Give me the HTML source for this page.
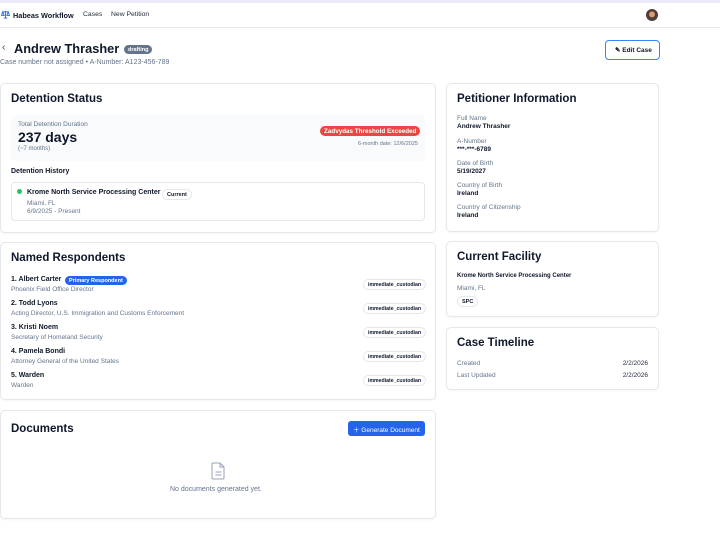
<!DOCTYPE html>
<html><head><meta charset="utf-8"><style>
*{box-sizing:border-box;margin:0;padding:0}
body{width:720px;height:545px;background:#fff;font-family:"Liberation Sans",sans-serif;color:#0f172a;position:relative;overflow:hidden}
.a{position:absolute;white-space:nowrap}
.card{position:absolute;border:1px solid #e5e7eb;border-radius:5px;background:#fff;box-shadow:0 1px 2px rgba(0,0,0,.04)}
.h{font-size:11.5px;font-weight:bold}
.lbl{font-size:6.5px;color:#64748b}
.val{font-size:6.5px;font-weight:bold;color:#0f172a}
.pill{position:absolute;border:1px solid #e5e7eb;border-radius:8px;font-size:5.5px;font-weight:bold;padding:1.5px 4px;background:#fff}
</style></head><body>
<div class="a" style="left:0;top:0;width:720px;height:3px;background:#ede9f6"></div>
<div class="a" style="left:0;top:27px;width:720px;height:1px;background:#e5e7eb"></div>
<svg class="a" style="left:1px;top:10px" width="9" height="9" viewBox="0 0 10 10" fill="none" stroke="#2563eb" stroke-width="1"><path d="M5 1v8M2 2h6M2 2l-1.5 4h3zM8 2l-1.5 4h3zM3 9h4"/></svg>
<div class="a" style="left:13px;top:11px;font-size:7.3px;font-weight:bold">Habeas Workflow</div>
<div class="a" style="left:83px;top:11px;font-size:6.8px;color:#1f2937">Cases</div>
<div class="a" style="left:111px;top:11px;font-size:6.8px;color:#1f2937">New Petition</div>
<div class="a" style="left:646px;top:9px;width:12px;height:12px;border-radius:50%;background:radial-gradient(circle at 50% 45%,#d4a07a 0 30%,#5a3a28 35%,#3b4a60 100%)"></div>

<div class="a" style="left:2px;top:42px;font-size:10px;color:#334155">‹</div>
<div class="a" style="left:14px;top:41px;font-size:12.8px;font-weight:bold">Andrew Thrasher</div>
<div class="a" style="left:124px;top:45px;background:#64748b;color:#fff;border-radius:6px;font-size:5.5px;font-weight:bold;padding:1.5px 4px">drafting</div>
<div class="a" style="left:0;top:59px;font-size:7px;color:#64748b">Case number not assigned • A-Number: A123-456-789</div>
<div class="a" style="left:605px;top:40px;width:55px;height:20px;border:1.5px solid #3b82f6;border-radius:4px;font-size:6.5px;font-weight:bold;padding:5px 0 0 9px">✎ Edit Case</div>

<div class="card" style="left:0;top:83px;width:436px;height:150px">
<div class="a h" style="left:10px;top:9px">Detention Status</div>
<div class="a" style="left:10px;top:31px;width:414px;height:46px;background:#f8fafc;border-radius:5px"></div>
<div class="a lbl" style="left:17px;top:37px">Total Detention Duration</div>
<div class="a" style="left:17px;top:45px;font-size:14px;font-weight:bold">237 days</div>
<div class="a lbl" style="left:17px;top:62px;font-size:6px">(~7 months)</div>
<div class="a" style="left:319px;top:42px;background:#ef4444;color:#fff;border-radius:6px;font-size:6.3px;font-weight:bold;padding:1.5px 4px">Zadvydas Threshold Exceeded</div>
<div class="a lbl" style="left:357px;top:57px;font-size:5.5px">6-month date: 12/6/2025</div>
<div class="a" style="left:10px;top:84px;font-size:7px;font-weight:bold">Detention History</div>
<div class="a" style="left:10px;top:98px;width:414px;height:39px;border:1px solid #e5e7eb;border-radius:4px"></div>
<div class="a" style="left:16px;top:105px;width:5px;height:5px;border-radius:50%;background:#22c55e"></div>
<div class="a" style="left:26px;top:105px;font-size:7px;font-weight:bold">Krome North Service Processing Center</div>
<div class="pill" style="left:161px;top:105px">Current</div>
<div class="a lbl" style="left:26px;top:116px">Miami, FL</div>
<div class="a lbl" style="left:26px;top:124px">6/9/2025 - Present</div>
</div>

<div class="card" style="left:0;top:242px;width:436px;height:158px">
<div class="a h" style="left:10px;top:9px">Named Respondents</div>
<div class="a val" style="left:10px;top:33px;font-size:7px">1. Albert Carter</div>
<div class="a" style="left:64px;top:33px;background:#2563eb;color:#fff;border-radius:6px;font-size:5.5px;font-weight:bold;padding:1.5px 4px">Primary Respondent</div>
<div class="a lbl" style="left:10px;top:43px">Phoenix Field Office Director</div>
<div class="pill" style="left:362px;top:36px;font-size:5.2px">immediate_custodian</div>
<div class="a val" style="left:10px;top:57px;font-size:7px">2. Todd Lyons</div>
<div class="a lbl" style="left:10px;top:67px">Acting Director, U.S. Immigration and Customs Enforcement</div>
<div class="pill" style="left:362px;top:60px;font-size:5.2px">immediate_custodian</div>
<div class="a val" style="left:10px;top:81px;font-size:7px">3. Kristi Noem</div>
<div class="a lbl" style="left:10px;top:91px">Secretary of Homeland Security</div>
<div class="pill" style="left:362px;top:84px;font-size:5.2px">immediate_custodian</div>
<div class="a val" style="left:10px;top:105px;font-size:7px">4. Pamela Bondi</div>
<div class="a lbl" style="left:10px;top:115px">Attorney General of the United States</div>
<div class="pill" style="left:362px;top:108px;font-size:5.2px">immediate_custodian</div>
<div class="a val" style="left:10px;top:129px;font-size:7px">5. Warden</div>
<div class="a lbl" style="left:10px;top:139px">Warden</div>
<div class="pill" style="left:362px;top:132px;font-size:5.2px">immediate_custodian</div>
</div>

<div class="card" style="left:0;top:410px;width:436px;height:109px">
<div class="a h" style="left:10px;top:12px">Documents</div>
<div class="a" style="left:347px;top:10px;width:77px;height:15px;background:#2563eb;border-radius:3px;color:#fff;font-size:6.5px;padding:3px 0 0 5px">＋ Generate Document</div>
<svg class="a" style="left:210px;top:51px" width="15" height="18" viewBox="0 0 15 18" fill="none" stroke="#94a3b8" stroke-width="1"><path d="M2 1h7l4 4v11a1 1 0 01-1 1H2a1 1 0 01-1-1V2a1 1 0 011-1zM9 1v4h4M4.5 10h6M4.5 13h6"/></svg>
<div class="a" style="left:169px;top:75px;font-size:7px;color:#64748b">No documents generated yet.</div>
</div>

<div class="card" style="left:446px;top:83px;width:213px;height:149px">
<div class="a h" style="left:10px;top:9px">Petitioner Information</div>
<div class="a lbl" style="left:10px;top:31px">Full Name</div><div class="a val" style="left:10px;top:39px">Andrew Thrasher</div>
<div class="a lbl" style="left:10px;top:54px">A-Number</div><div class="a val" style="left:10px;top:62px">***-***-6789</div>
<div class="a lbl" style="left:10px;top:76px">Date of Birth</div><div class="a val" style="left:10px;top:84px">5/19/2027</div>
<div class="a lbl" style="left:10px;top:98px">Country of Birth</div><div class="a val" style="left:10px;top:106px">Ireland</div>
<div class="a lbl" style="left:10px;top:120px">Country of Citizenship</div><div class="a val" style="left:10px;top:128px">Ireland</div>
</div>

<div class="card" style="left:446px;top:241px;width:213px;height:76px">
<div class="a h" style="left:10px;top:9px">Current Facility</div>
<div class="a val" style="left:10px;top:31px;font-size:6px">Krome North Service Processing Center</div>
<div class="a lbl" style="left:10px;top:43px">Miami, FL</div>
<div class="pill" style="left:10px;top:54px">SPC</div>
</div>

<div class="card" style="left:446px;top:327px;width:213px;height:63px">
<div class="a h" style="left:10px;top:9px">Case Timeline</div>
<div class="a lbl" style="left:10px;top:32px">Created</div><div class="a val" style="right:10px;top:32px;font-weight:normal;color:#1e293b">2/2/2026</div>
<div class="a lbl" style="left:10px;top:44px">Last Updated</div><div class="a val" style="right:10px;top:44px;font-weight:normal;color:#1e293b">2/2/2026</div>
</div>
</body></html>
